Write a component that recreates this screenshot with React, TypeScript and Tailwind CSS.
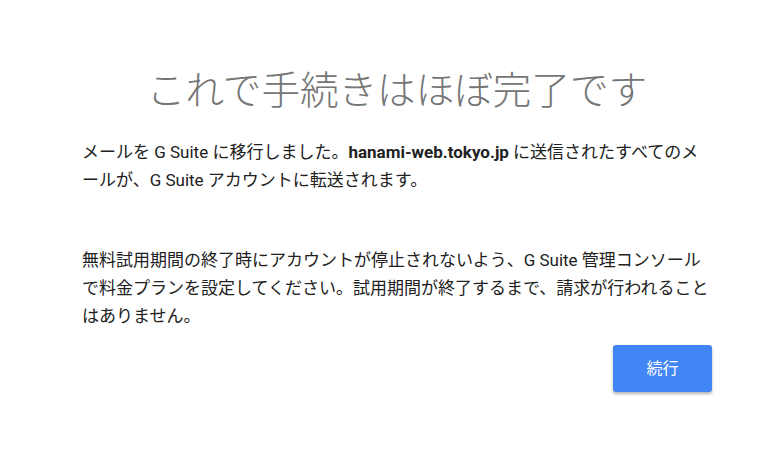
export default function App() {
  return (
    <div className="w-[773px] h-[470px] bg-white">
      <div className="ml-[82px] w-[630px] pt-[59px]" style={{ fontFamily: 'Roboto, "Noto Sans CJK JP", sans-serif' }}>
        <h1 className="text-center text-[38.6px] leading-[56px] font-light text-[#757575]" style={{ fontFamily: '"Noto Sans CJK JP", sans-serif' }}>
          これで手続きはほぼ完了です
        </h1>
        <p className="mt-[23px] text-[17px] leading-[28px] text-[#212121]">
          メールを G Suite に移行しました。<span className="font-bold">hanami-web.tokyo.jp</span> に送信されたすべてのメールが、G Suite アカウントに転送されます。
        </p>
        <p className="mt-[52px] text-[17px] leading-[28px] text-[#212121]">
          無料試用期間の終了時にアカウントが停止されないよう、G Suite 管理コンソールで料金プランを設定してください。試用期間が終了するまで、請求が行われることはありません。
        </p>
        <div className="flex justify-end mt-[15px]">
          <button className="w-[99px] h-[47px] rounded-[3px] bg-[#4285f4] text-white text-[16px] shadow-[0_2px_3px_rgba(0,0,0,0.3)]">
            続行
          </button>
        </div>
      </div>
    </div>
  );
}
